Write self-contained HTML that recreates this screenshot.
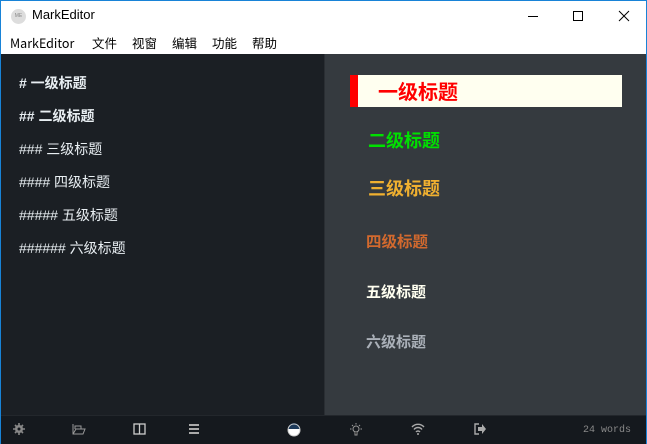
<!DOCTYPE html>
<html><head><meta charset="utf-8"><style>
*{margin:0;padding:0;box-sizing:border-box}
body{width:647px;height:444px;overflow:hidden;background:#fff;font-family:"Liberation Sans","Noto Sans CJK SC",sans-serif;position:relative}
.win{position:absolute;left:0;top:0;width:647px;height:444px;border:1px solid #1883d7;}
.title{position:absolute;left:0;top:0;width:645px;height:30px;background:#fff}
.logo{position:absolute;left:10px;top:8px;width:15px;height:15px;border-radius:50%;background:#ddd;font-size:5px;color:#888;text-align:center;line-height:15px}
.ttext{position:absolute;left:31px;top:6px;font-size:13px;color:#000;line-height:16px}
.menu{position:absolute;left:0;top:30px;width:645px;height:23px;background:#fff;font-size:12.5px;color:#000;font-family:"Noto Sans CJK SC","Liberation Sans",sans-serif}
.menu span{position:absolute;top:4px;line-height:16px}
.left{position:absolute;left:0;top:53px;width:323px;height:361px;background:#1b1f24}
.right{position:absolute;left:323px;top:53px;width:322px;height:361px;background:#353a3f;border-left:1px solid #2a2e33}
.l{position:absolute;left:18px;color:#e8eef2;font-size:14px;line-height:16px;font-family:"Liberation Sans","Noto Sans CJK SC",sans-serif}
.status{position:absolute;left:0;top:414px;width:645px;height:29px;background:#15191e;border-top:1px solid #23272c}
.h{position:absolute;font-weight:bold;white-space:nowrap;line-height:1.2;font-family:"Noto Sans CJK SC",sans-serif}
.ic{position:absolute;top:7px}
</style></head><body><div class="win">
<div class="title"><div class="logo">ME</div><div class="ttext">MarkEditor</div>
<svg style="position:absolute;left:500px;top:0" width="147" height="30"><line x1="27" y1="15.5" x2="37" y2="15.5" stroke="#000"/><rect x="72.5" y="10.5" width="9" height="9" fill="none" stroke="#000"/><path d="M118 10L128 20M128 10L118 20" stroke="#000"/></svg></div>
<div class="menu"><span style="left:9px">MarkEditor</span><span style="left:91px">文件</span><span style="left:131px">视窗</span><span style="left:171px">编辑</span><span style="left:211px">功能</span><span style="left:251px">帮助</span></div>
<div class="left">
<div class="l" style="top:21px;font-weight:bold"># 一级标题</div>
<div class="l" style="top:54px;font-weight:bold">## 二级标题</div>
<div class="l" style="top:87px">### 三级标题</div>
<div class="l" style="top:120px">#### 四级标题</div>
<div class="l" style="top:153px">##### 五级标题</div>
<div class="l" style="top:186px">###### 六级标题</div>
</div>
<div class="right">
<div style="position:absolute;left:25px;top:21px;width:272px;height:32px;background:#fffff0;border-left:8px solid #f00"></div>
<div class="h" style="left:53px;top:25px;font-size:20px;color:#f00">一级标题</div>
<div class="h" style="left:43px;top:76px;font-size:18px;color:#00e000">二级标题</div>
<div class="h" style="left:43px;top:124px;font-size:18px;color:#f0b030">三级标题</div>
<div class="h" style="left:41px;top:178px;font-size:15.5px;color:#d2692e">四级标题</div>
<div class="h" style="left:41px;top:229px;font-size:15px;color:#fffff0">五级标题</div>
<div class="h" style="left:41px;top:279px;font-size:15px;color:#aab0b8">六级标题</div>
</div>
<div class="status">
<svg class="ic" style="left:12px" width="12" height="12"><circle cx="6" cy="6" r="4" fill="#888"/><path d="M6 0v12M0 6h12M2 2l8 8M10 2l-8 8" stroke="#888" stroke-width="1.6"/><circle cx="6" cy="6" r="1.5" fill="#15191e"/></svg>
<svg class="ic" style="left:71px" width="14" height="12"><path d="M1 1v10h10l2-5H4L1 11M3 6V3h6v3" fill="none" stroke="#999"/></svg>
<svg class="ic" style="left:132px" width="13" height="12"><rect x="1" y="1" width="11" height="10" fill="none" stroke="#ccc" stroke-width="1.3"/><line x1="6.5" y1="1" x2="6.5" y2="11" stroke="#ccc" stroke-width="1.3"/></svg>
<svg class="ic" style="left:187px" width="12" height="12"><path d="M1 2h10M1 6h10M1 10h10" stroke="#aaa" stroke-width="2"/></svg>
<svg class="ic" style="left:286px" width="14" height="14"><circle cx="7" cy="7" r="6" fill="#fff"/><path d="M1 6a6 6 0 0 1 12 0z" fill="#1d3a5a"/><circle cx="7" cy="7" r="6" fill="none" stroke="#ccc"/></svg>
<svg class="ic" style="left:349px" width="12" height="14"><circle cx="6" cy="6" r="3" fill="none" stroke="#999"/><path d="M5 9v3h2V9M6 0v1.5M0 6h1.5M10.5 6H12M2 2l1 1M10 2l-1 1" stroke="#999"/></svg>
<svg class="ic" style="left:410px" width="14" height="12"><path d="M1 4a8 8 0 0 1 12 0M3 6.5a5 5 0 0 1 8 0M5 9a2.5 2.5 0 0 1 4 0" fill="none" stroke="#aaa" stroke-width="1.4"/><circle cx="7" cy="11" r="1" fill="#aaa"/></svg>
<svg class="ic" style="left:473px" width="13" height="12"><path d="M5 1H1v10h4" fill="none" stroke="#aaa" stroke-width="1.4"/><path d="M4 4h4V1l4 5-4 5V8H4z" fill="#aaa"/></svg>
<div style="position:absolute;left:582px;top:9px;font-family:'Liberation Mono',monospace;font-size:10px;color:#888">24 words</div>
</div>
</div></body></html>
